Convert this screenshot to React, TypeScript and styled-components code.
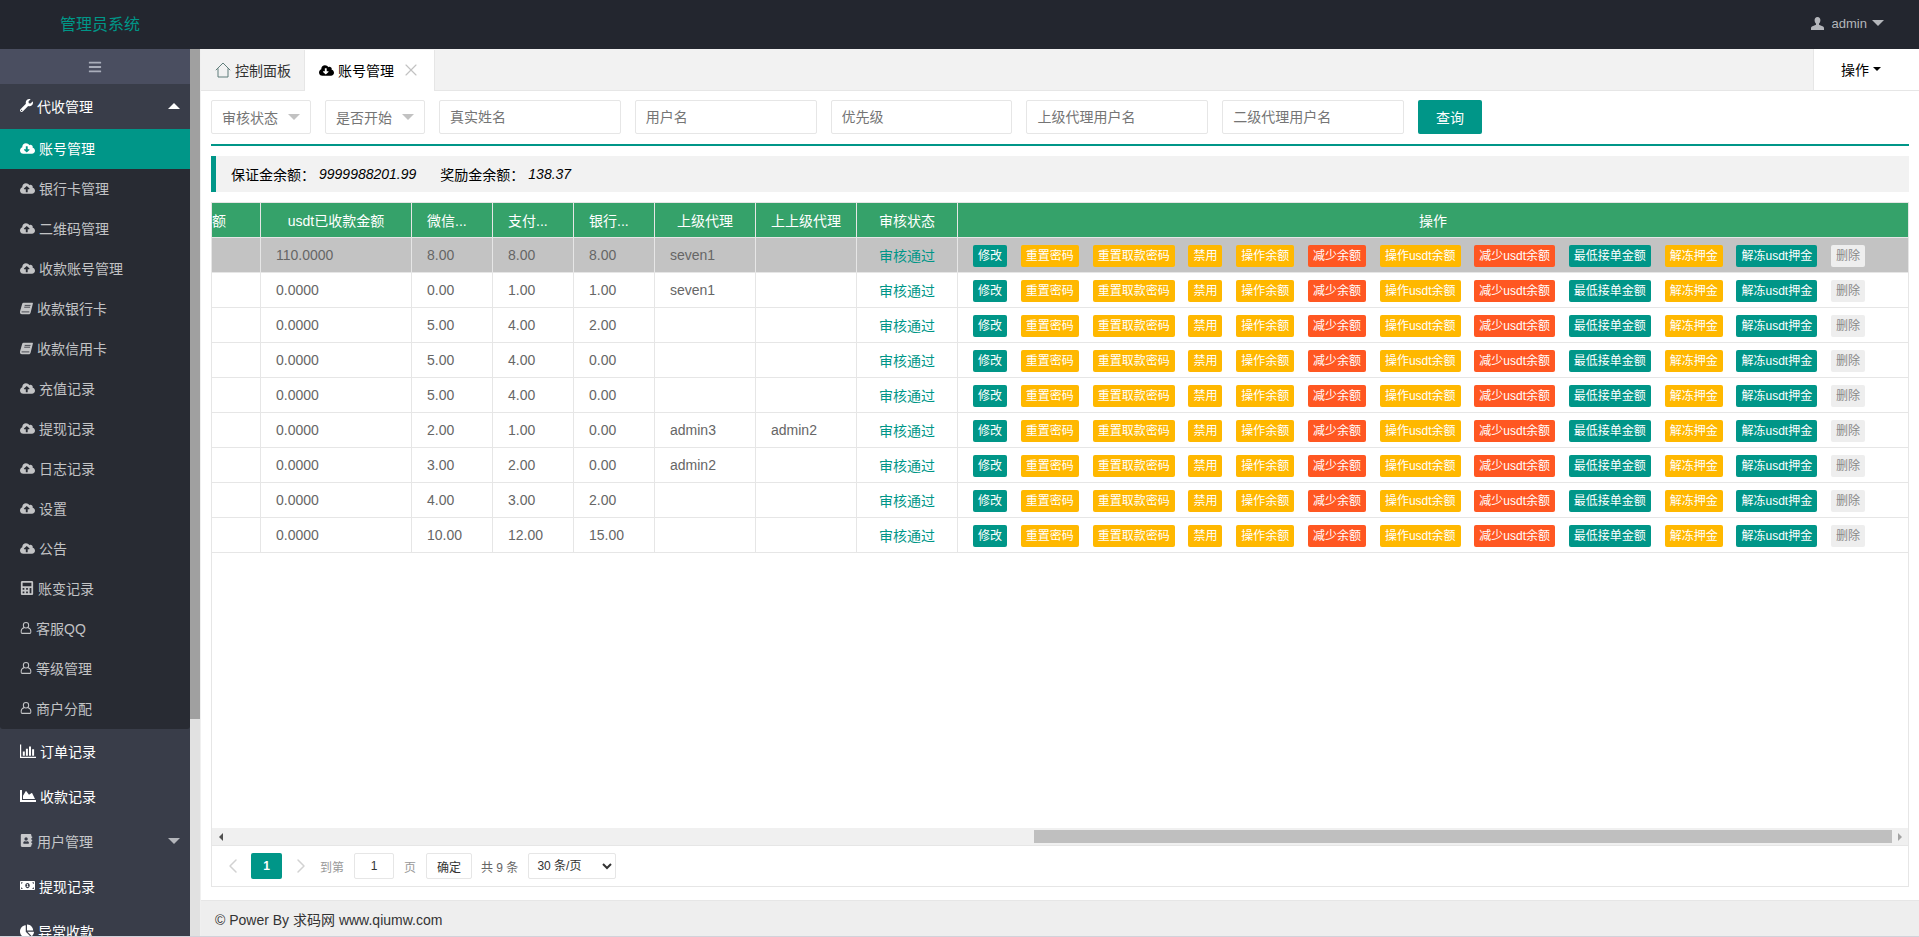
import React from "react";
import styled, { createGlobalStyle } from "styled-components";
import {
  FaBars, FaWrench, FaCloudDownloadAlt, FaCloudUploadAlt, FaCalculator,
  FaChartArea, FaAddressBook, FaMoneyBillAlt, FaChartPie,
} from "react-icons/fa";
import { ChevronLeft, ChevronRight, X } from "lucide-react";

const GlobalStyle = createGlobalStyle`
  html, body { margin: 0; padding: 0; height: 100%; overflow: hidden; }
  #root { height: 100%; }
  * { box-sizing: border-box; }
  body { font-family: "Liberation Sans", "Noto Sans CJK SC", sans-serif; font-size: 14px; color: #333; }
`;

const Page = styled.div`height: 937px; width: 1919px; display: flex; flex-direction: column; overflow: hidden; background: #fff; border-bottom: 1px solid #d2d2da;`;
const TopBar = styled.header`height: 49px; flex: none; background: #23262f; display: flex; align-items: center; justify-content: space-between; padding: 0 35px 3px 60px;`;
const Logo = styled.div`font-size: 16px; color: #009688;`;
const UserBox = styled.div`display: flex; align-items: center; font-size: 13px; color: #b4b6bb; gap: 0;`;
const UserName = styled.span`margin: 0 5px 0 8px;`;
const Caret = styled.i<{ $up?: boolean; $size?: number; $color?: string }>`
  display: block; width: 0; height: 0;
  border-left: ${p => p.$size ?? 6}px solid transparent;
  border-right: ${p => p.$size ?? 6}px solid transparent;
  border-${p => (p.$up ? "bottom" : "top")}: ${p => p.$size ?? 6}px solid ${p => p.$color ?? "#b4b6bb"};
`;
const Body = styled.div`flex: 1; min-height: 0; display: flex;`;
const Side = styled.aside`width: 190px; flex: none; background: #393d49; overflow: hidden;`;
const SideScroll = styled.div`width: 10px; flex: none; background: #e1e1e1;`;
const SideThumb = styled.div`height: 670px; background: #a0a0a0;`;
const Toggle = styled.div`height: 35px; background: #4a4e60; display: flex; align-items: center; justify-content: center; color: #a9adba;`;
const MenuRow = styled.div<{ $dim?: boolean }>`
  height: 45px; display: flex; align-items: center; padding: 0 10px 2px 20px; white-space: nowrap;
  color: ${p => (p.$dim ? "rgba(255,255,255,.72)" : "#fff")};
`;
const SubMenu = styled.div`background: #282b33; border-radius: 0 0 3px 3px;`;
const SubRow = styled.div<{ $active?: boolean }>`
  height: 40px; display: flex; align-items: center; padding: 0 0 2px 20px; white-space: nowrap;
  background: ${p => (p.$active ? "#009688" : "transparent")};
  color: ${p => (p.$active ? "#fff" : "rgba(255,255,255,.72)")};
`;
const IconSlot = styled.span<{ $w: number }>`
  width: ${p => p.$w}px; flex: none; display: flex; align-items: center; justify-content: center; margin-right: 4px;
  svg { width: ${p => p.$w}px; height: ${p => p.$w}px; display: block; }
`;
const MenuLabel = styled.span`flex: 1;`;

const Main = styled.main`flex: 1; min-width: 0; display: flex; flex-direction: column; border-left: 1px solid #f0f0f0;`;
const TabBar = styled.div`height: 42px; flex: none; background: #f2f2f2; border-bottom: 1px solid #e6e6e6; display: flex; align-items: stretch;`;
const Tab = styled.div<{ $active?: boolean; $w: number }>`
  width: ${p => p.$w}px; display: flex; align-items: center; gap: 4px; padding-left: 14px; white-space: nowrap;
  margin-top: 1px; margin-bottom: -1px; padding-bottom: 1px;
  background: ${p => (p.$active ? "#fff" : "transparent")};
  color: ${p => (p.$active ? "#000" : "#333")};
  border-right: 1px solid #e6e6e6;
  svg.cloud { width: 15px; height: 15px; }
`;
const CloseMark = styled.span`margin-left: 3px; display: flex; color: #c2c2c2;`;
const TabSpacer = styled.div`flex: 1;`;
const TabOps = styled.div`width: 106px; flex: none; background: #fff; border-left: 1px solid #e6e6e6; display: flex; align-items: center; justify-content: flex-end; gap: 4px; padding: 0 38px 1px 0; color: #000;`;

const Content = styled.div`flex: 1; min-height: 0; display: flex; flex-direction: column; padding: 9px 10px 13px;`;
const SearchForm = styled.form`display: flex; gap: 14px; padding-bottom: 10px; border-bottom: 2px solid #009688; flex: none;`;
const FakeSelect = styled.div`width: 100px; height: 34px; border: 1px solid #e6e6e6; border-radius: 2px; display: flex; align-items: center; justify-content: space-between; padding: 0 10px; color: #757575;`;
const SelectText = styled.span`width: 60px; overflow: hidden; white-space: nowrap;`;
const SearchInput = styled.input`width: 181.8px; height: 34px; border: 1px solid #e6e6e6; border-radius: 2px; padding: 0 10px; font: inherit; color: #333; outline: none; &::placeholder { color: #757575; opacity: 1; }`;
const SearchBtn = styled.button`width: 64px; height: 34px; border: 0; border-radius: 2px; background: #009688; color: #fff; font: inherit; padding: 0;`;
const Balance = styled.div`height: 36px; flex: none; margin-top: 10px; background: #f2f2f2; border-left: 5px solid #009688; display: flex; align-items: center; padding-left: 15px; color: #000;`;
const BalanceValue = styled.em`font-style: italic; margin: 0 24px 0 4px;`;

const Frame = styled.div`flex: 1; min-height: 0; margin-top: 10px; border: 1px solid #e6e6e6; display: flex; flex-direction: column;`;
const TableView = styled.div`flex: 1; min-height: 0; overflow: hidden;`;
const Grid = styled.table`width: 100%; table-layout: fixed; border-collapse: separate; border-spacing: 0;`;
const Th = styled.th<{ $left?: boolean; $flush?: boolean }>`
  height: 35px; padding: ${p => (p.$flush ? "0" : "0 15px")}; background: #35a26a; color: #fff; font-weight: 400;
  border-right: 1px solid #e6e6e6; border-bottom: 1px solid #e6e6e6; white-space: nowrap; overflow: hidden;
  text-align: ${p => (p.$left || p.$flush ? "left" : "center")};
  &:last-child { border-right: 0; }
`;
const Td = styled.td<{ $hot?: boolean; $center?: boolean; $ok?: boolean }>`
  height: 35px; padding: 0 15px; background: ${p => (p.$hot ? "#c3c3c3" : "#fff")};
  color: ${p => (p.$ok ? "#009688" : "#666")}; text-align: ${p => (p.$center ? "center" : "left")};
  border-right: 1px solid #e6e6e6; border-bottom: 1px solid #e6e6e6; white-space: nowrap; overflow: hidden;
`;
const ActionCell = styled(Td)`padding: 2px 0 0 15px; border-right: 0;`;
const Actions = styled.div`display: flex; gap: 13.8px;`;
const MiniBtn = styled.span<{ $bg: string; $fg: string }>`
  height: 22px; line-height: 22px; padding: 0 5px; font-size: 12px; border-radius: 2px; background: ${p => p.$bg}; color: ${p => p.$fg}; white-space: nowrap;
`;

const HBar = styled.div`height: 17px; flex: none; background: #f0f0f0; display: flex; align-items: center;`;
const HArrow = styled.div<{ $w: number }>`width: ${p => p.$w}px; flex: none; display: flex; justify-content: center;`;
const Tri = styled.i<{ $dir: "l" | "r"; $color: string }>`
  display: block; width: 0; height: 0; border-top: 4px solid transparent; border-bottom: 4px solid transparent;
  ${p => (p.$dir === "l" ? `border-right: 4px solid ${p.$color};` : `border-left: 4px solid ${p.$color};`)}
`;
const HLane = styled.div`flex: 1; display: flex; justify-content: flex-end;`;
const HThumb = styled.div`width: 858px; height: 13px; background: #bfbfbf;`;

const Pager = styled.div`height: 41px; flex: none; border-top: 1px solid #e6e6e6; display: flex; align-items: center; padding-left: 12px; font-size: 12px; color: #666;`;
const PageNav = styled.span<{ $side: "l" | "r" }>`
  width: 27px; display: flex; justify-content: center; color: #d2d2d2;
  padding-${p => (p.$side === "l" ? "right" : "left")}: 10px;
  svg { flex: none; }
`;
const PageCurrent = styled.span`width: 31px; height: 26px; background: #009688; color: #fff; border-radius: 2px; text-align: center; line-height: 26px; font-weight: 700;`;
const PageHint = styled.span<{ $ml: number }>`margin-left: ${p => p.$ml}px; color: #999;`;
const PageInput = styled.input`width: 40px; height: 26px; margin-left: 10px; border: 1px solid #e6e6e6; border-radius: 2px; text-align: center; font: inherit; color: #333; padding: 0; outline: none;`;
const PageGo = styled.button`width: 46px; height: 26px; margin-left: 10px; border: 1px solid #e6e6e6; border-radius: 2px; background: #fff; font: inherit; color: #333; padding: 0;`;
const PageTotal = styled.span`margin-left: 9px;`;
const PageSize = styled.select`width: 88px; height: 26px; margin-left: 10px; border: 1px solid #e6e6e6; border-radius: 2px; background: #fff; font: inherit; color: #333; padding-left: 4px; outline: none;`;

const Footer = styled.footer`height: 36px; flex: none; background: #eee; border-top: 1px solid #e6e6e6; display: flex; align-items: center; padding-left: 14px; color: #333;`;

const HomeIcon = () => (
  <svg width="16" height="16" viewBox="0 0 16 16" fill="none" stroke="#5f7d7a" strokeWidth="1">
    <path d="M.8 8.2 8 1l7.2 7.2" />
    <path d="M3 6.400V15h10V6.400" />
  </svg>
);
const UserIcon = () => (
  <svg width="13" height="13" viewBox="0 0 13 13" fill="#b4b6bb">
    <path d="M6.500 0C4.600 0 3.600 1.400 3.600 3.200c0 1.300.5 2.600 1.400 3.300v1.200L.9 9.600C.2 10 0 10.600 0 11.300V13h13v-1.700c0-.7-.2-1.300-.9-1.700L8 7.700V6.500c.9-.7 1.400-2 1.400-3.300C9.400 1.400 8.400 0 6.500 0Z" />
  </svg>
);
const BookIcon = () => (
  <svg viewBox="0 0 13 13">
    <path fill="currentColor" d="M3.600.8h8.900c.4 0 .5.300.4.700l-2.300 9.200c-.2.900-.9 1.500-1.800 1.500H1.900C.7 12.200 0 11.300 0 10.200c0-.3 0-.6.1-.9L2.200 1.800C2.400 1.200 3 .8 3.600.8Z" />
    <path fill="none" stroke="#282b33" strokeWidth=".8" d="M4.700 3.400h5.800M4.200 5.200H10M1.600 9.900h7.700" />
  </svg>
);
const OutlineUserIcon = () => (
  <svg viewBox="0 0 12 13.500" fill="none" stroke="currentColor" strokeWidth="1.150">
    <ellipse cx="6" cy="3.700" rx="3" ry="3.100" />
    <path d="M3.800 6.400C1.800 7 .6 8.200.6 10.100v1.500c0 .7.400 1.200 1.100 1.200h8.600c.7 0 1.100-.5 1.100-1.200v-1.500c0-1.900-1.200-3.100-3.200-3.700" />
  </svg>
);
const BarChartIcon = () => (
  <svg viewBox="0 0 16 16" fill="currentColor">
    <path d="M0 1.500h1.200v12.300H16V15H0Z" />
    <path d="M2.800 8.500h2v4.200h-2ZM5.900 5.800h2v6.900h-2ZM9 3.500h2v9.200H9ZM12.100 6.300h2v6.400h-2Z" />
  </svg>
);

const cloudDown = { I: FaCloudDownloadAlt, w: 15 };
const cloudUp = { I: FaCloudUploadAlt, w: 15 };
const book = { I: BookIcon, w: 13 };
const calc = { I: FaCalculator, w: 14 };
const user = { I: OutlineUserIcon, w: 12 };

const subMenu = [
  { t: "账号管理", ...cloudDown, active: true },
  { t: "银行卡管理", ...cloudUp },
  { t: "二维码管理", ...cloudUp },
  { t: "收款账号管理", ...cloudUp },
  { t: "收款银行卡", ...book },
  { t: "收款信用卡", ...book },
  { t: "充值记录", ...cloudUp },
  { t: "提现记录", ...cloudUp },
  { t: "日志记录", ...cloudUp },
  { t: "设置", ...cloudUp },
  { t: "公告", ...cloudUp },
  { t: "账变记录", ...calc },
  { t: "客服QQ", ...user },
  { t: "等级管理", ...user },
  { t: "商户分配", ...user },
];

const lowerMenu = [
  { t: "订单记录", I: BarChartIcon, w: 16 },
  { t: "收款记录", I: FaChartArea, w: 16 },
  { t: "用户管理", I: FaAddressBook, w: 13, dim: true, arrow: true },
  { t: "提现记录", I: FaMoneyBillAlt, w: 15 },
  { t: "异常收款", I: FaChartPie, w: 14 },
];

const columns = [
  { t: "额", w: 49, flush: true },
  { t: "usdt已收款金额", w: 151 },
  { t: "微信...", w: 81, left: true },
  { t: "支付...", w: 81, left: true },
  { t: "银行...", w: 81, left: true },
  { t: "上级代理", w: 101 },
  { t: "上上级代理", w: 101 },
  { t: "审核状态", w: 101 },
  { t: "操作" },
];

const rows = [
  ["110.0000", "8.00", "8.00", "8.00", "seven1", ""],
  ["0.0000", "0.00", "1.00", "1.00", "seven1", ""],
  ["0.0000", "5.00", "4.00", "2.00", "", ""],
  ["0.0000", "5.00", "4.00", "0.00", "", ""],
  ["0.0000", "5.00", "4.00", "0.00", "", ""],
  ["0.0000", "2.00", "1.00", "0.00", "admin3", "admin2"],
  ["0.0000", "3.00", "2.00", "0.00", "admin2", ""],
  ["0.0000", "4.00", "3.00", "2.00", "", ""],
  ["0.0000", "10.00", "12.00", "15.00", "", ""],
];

const TEAL = "#009688", AMBER = "#ffb800", RED = "#ff5722";
const actions: { t: string; bg: string; fg?: string }[] = [
  { t: "修改", bg: TEAL }, { t: "重置密码", bg: AMBER }, { t: "重置取款密码", bg: AMBER },
  { t: "禁用", bg: AMBER }, { t: "操作余额", bg: AMBER }, { t: "减少余额", bg: RED },
  { t: "操作usdt余额", bg: AMBER }, { t: "减少usdt余额", bg: RED }, { t: "最低接单金额", bg: TEAL },
  { t: "解冻押金", bg: AMBER }, { t: "解冻usdt押金", bg: TEAL }, { t: "删除", bg: "#eeeeee", fg: "#888" },
];

const placeholders = ["真实姓名", "用户名", "优先级", "上级代理用户名", "二级代理用户名"];

export default function App() {
  return (
    <Page>
      <GlobalStyle />
      <TopBar>
        <Logo>管理员系统</Logo>
        <UserBox>
          <UserIcon />
          <UserName>admin</UserName>
          <Caret />
        </UserBox>
      </TopBar>
      <Body>
        <Side>
          <Toggle><FaBars size={14} /></Toggle>
          <MenuRow>
            <IconSlot $w={13}><FaWrench /></IconSlot>
            <MenuLabel>代收管理</MenuLabel>
            <Caret $up $color="#fff" />
          </MenuRow>
          <SubMenu>
            {subMenu.map(m => (
              <SubRow key={m.t} $active={m.active}>
                <IconSlot $w={m.w}><m.I /></IconSlot>
                {m.t}
              </SubRow>
            ))}
          </SubMenu>
          {lowerMenu.map(m => (
            <MenuRow key={m.t} $dim={m.dim}>
              <IconSlot $w={m.w}><m.I /></IconSlot>
              <MenuLabel>{m.t}</MenuLabel>
              {m.arrow && <Caret $color="#b4b6bb" />}
            </MenuRow>
          ))}
        </Side>
        <SideScroll><SideThumb /></SideScroll>
        <Main>
          <TabBar>
            <Tab $w={104}><HomeIcon />控制面板</Tab>
            <Tab $active $w={130}>
              <FaCloudDownloadAlt className="cloud" />账号管理
              <CloseMark><X size={20} strokeWidth={1.4} /></CloseMark>
            </Tab>
            <TabSpacer />
            <TabOps>操作<Caret $size={4} $color="#000" /></TabOps>
          </TabBar>
          <Content>
            <SearchForm>
              <FakeSelect><SelectText>审核状态</SelectText><Caret $color="#c2c2c2" /></FakeSelect>
              <FakeSelect><SelectText>是否开始</SelectText><Caret $color="#c2c2c2" /></FakeSelect>
              {placeholders.map(p => <SearchInput key={p} placeholder={p} />)}
              <SearchBtn type="button">查询</SearchBtn>
            </SearchForm>
            <Balance>
              保证金余额：<BalanceValue>9999988201.99</BalanceValue>
              奖励金余额：<BalanceValue>138.37</BalanceValue>
            </Balance>
            <Frame>
              <TableView>
                <Grid>
                  <colgroup>
                    {columns.map(c => <col key={c.t} width={c.w} />)}
                  </colgroup>
                  <thead>
                    <tr>
                      {columns.map(c => <Th key={c.t} $left={c.left} $flush={c.flush}>{c.t}</Th>)}
                    </tr>
                  </thead>
                  <tbody>
                    {rows.map((r, i) => (
                      <tr key={i}>
                        <Td $hot={i === 0} />
                        {r.map((v, j) => <Td key={j} $hot={i === 0}>{v}</Td>)}
                        <Td $hot={i === 0} $center $ok>审核通过</Td>
                        <ActionCell $hot={i === 0}>
                          <Actions>
                            {actions.map(a => <MiniBtn key={a.t} $bg={a.bg} $fg={a.fg ?? "#fff"}>{a.t}</MiniBtn>)}
                          </Actions>
                        </ActionCell>
                      </tr>
                    ))}
                  </tbody>
                </Grid>
              </TableView>
              <HBar>
                <HArrow $w={17}><Tri $dir="l" $color="#505050" /></HArrow>
                <HLane><HThumb /></HLane>
                <HArrow $w={16}><Tri $dir="r" $color="#a3a3a3" /></HArrow>
              </HBar>
              <Pager>
                <PageNav $side="l"><ChevronLeft size={24} strokeWidth={1.5} /></PageNav>
                <PageCurrent>1</PageCurrent>
                <PageNav $side="r"><ChevronRight size={24} strokeWidth={1.5} /></PageNav>
                <PageHint $ml={11}>到第</PageHint>
                <PageInput defaultValue="1" />
                <PageHint $ml={10}>页</PageHint>
                <PageGo type="button">确定</PageGo>
                <PageTotal>共 9 条</PageTotal>
                <PageSize defaultValue="30"><option value="30">30 条/页</option></PageSize>
              </Pager>
            </Frame>
          </Content>
          <Footer>© Power By 求码网 www.qiumw.com</Footer>
        </Main>
      </Body>
    </Page>
  );
}
